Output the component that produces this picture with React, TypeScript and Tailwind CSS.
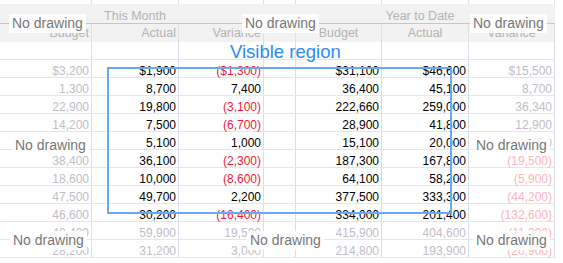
import React from "react";

// Seven columns: This Month (3), spacer, Year to Date (3)
const GRID = "grid grid-cols-[92px_87px_85px_32px_86px_87px_86px] w-[555px]";

const rows: string[][] = [
  ["$3,200", "$1,900", "($1,300)", "$31,100", "$46,600", "$15,500"],
  ["1,300", "8,700", "7,400", "36,400", "45,100", "8,700"],
  ["22,900", "19,800", "(3,100)", "222,660", "259,000", "36,340"],
  ["14,200", "7,500", "(6,700)", "28,900", "41,800", "12,900"],
  ["4,100", "5,100", "1,000", "15,100", "20,000", "4,900"],
  ["38,400", "36,100", "(2,300)", "187,300", "167,800", "(19,500)"],
  ["18,600", "10,000", "(8,600)", "64,100", "58,200", "(5,900)"],
  ["47,500", "49,700", "2,200", "377,500", "333,300", "(44,200)"],
  ["46,600", "30,200", "(16,400)", "334,000", "201,400", "(132,600)"],
  ["40,400", "59,900", "19,500", "415,900", "404,600", "(11,300)"],
  ["28,200", "31,200", "3,000", "214,800", "193,900", "(20,900)"],
];

function Cell({ value, faded }: { value: string; faded: boolean }) {
  const neg = value.startsWith("(");
  const color = faded
    ? neg
      ? "text-[#ffb3bd]"
      : "text-[#c1bdc7]"
    : neg
      ? "text-[#ee1a38]"
      : "text-black";
  return (
    <div className={`h-[17px] border-r border-[#d8dfeb] pr-[2px] text-right leading-[22px] ${color}`}>
      {value}
    </div>
  );
}

function Spacer() {
  return <div className="h-[17px] border-r border-[#d8dfeb]" />;
}

function NoDrawing({ pos }: { pos: string }) {
  return (
    <div className={`absolute ${pos} bg-white/90 px-[3px] text-[14px] leading-[19px] text-[#777]`}>
      No drawing
    </div>
  );
}

export default function App() {
  return (
    <div className="relative h-[263px] w-[563px] overflow-hidden bg-white font-['Liberation_Sans',Arial,sans-serif] text-[12px]">
      {/* top strip with column ticks */}
      <div className={`${GRID} h-[4px]`}>
        {[0, 1, 2, 3, 4, 5, 6].map((i) => (
          <div key={i} className="h-[4px] border-r border-[#d8dfeb]" />
        ))}
      </div>

      {/* header */}
      <div className="w-[555px] bg-[#f2f2f2] text-[12.5px] text-[#b3b3b3]">
        <div className={`${GRID} h-[20px] border-b border-[#c6c6c6]`}>
          <div className="col-span-3 h-[19px] pl-[6px] text-center leading-[24px]">This Month</div>
          <div className="h-[19px]" />
          <div className="col-span-3 h-[19px] pr-[11px] text-center leading-[24px]">Year to Date</div>
        </div>
        <div className={`${GRID} h-[18px]`}>
          <div className="h-[18px] border-r border-[#e0e0e0] pr-[2px] text-right leading-[19px]">Budget</div>
          <div className="h-[18px] border-r border-[#e0e0e0] pr-[2px] text-right leading-[19px]">Actual</div>
          <div className="h-[18px] border-r border-[#e0e0e0] pr-[2px] text-right leading-[19px]">Variance</div>
          <div className="h-[18px] border-r border-[#e0e0e0]" />
          <div className="h-[18px] border-r border-[#e0e0e0] text-center leading-[19px]">Budget</div>
          <div className="h-[18px] border-r border-[#e0e0e0] text-center leading-[19px]">Actual</div>
          <div className="h-[18px] border-r border-[#e0e0e0] text-center leading-[19px]">Variance</div>
        </div>
      </div>

      {/* empty row */}
      <div className={`${GRID} h-[18px] border-b border-[#e2e6ee]`}>
        {[0, 1, 2, 3, 4, 5, 6].map((i) => (
          <Spacer key={i} />
        ))}
      </div>

      {/* data rows */}
      {rows.map((r, ri) => {
        const low = ri >= 9;
        return (
          <div key={ri} className={`${GRID} h-[18px] border-b border-[#e2e6ee]`}>
            <Cell value={r[0]} faded />
            <Cell value={r[1]} faded={low} />
            <Cell value={r[2]} faded={low} />
            <Spacer />
            <Cell value={r[3]} faded={low} />
            <Cell value={r[4]} faded={low} />
            <Cell value={r[5]} faded />
          </div>
        );
      })}

      {/* visible region overlay */}
      <div className="absolute left-[107px] top-[67px] h-[147px] w-[345px] border-2 border-[#69a9f0]" />
      <div className="absolute left-[230px] top-[43px] text-[18.5px] leading-none text-[#2b8cf2]">Visible region</div>

      <NoDrawing pos="left-[9px] top-[14px]" />
      <NoDrawing pos="left-[242px] top-[14px]" />
      <NoDrawing pos="left-[470px] top-[14px]" />
      <NoDrawing pos="left-[12px] top-[136px]" />
      <NoDrawing pos="left-[473px] top-[136px]" />
      <NoDrawing pos="left-[10px] top-[231px]" />
      <NoDrawing pos="left-[247px] top-[231px]" />
      <NoDrawing pos="left-[473px] top-[231px]" />
    </div>
  );
}
